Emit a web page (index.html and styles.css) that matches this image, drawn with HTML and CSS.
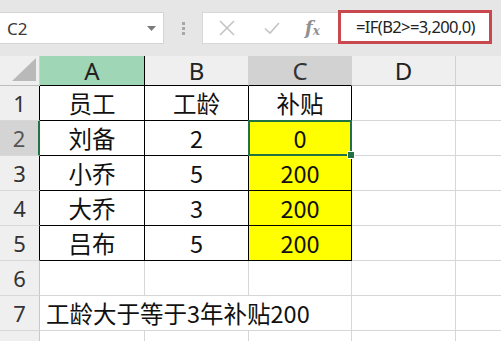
FILE: index.html
```html
<!DOCTYPE html>
<html lang="zh">
<head>
<meta charset="utf-8">
<link rel="stylesheet" href="styles.css">
</head>
<body>
<div class="app">
  <div class="toolbar">
    <div class="namebox">
      <span class="ref">C2</span>
      <svg class="caret" width="9" height="6" viewBox="0 0 9 6"><path d="M0 0h9L4.5 5z" fill="#7a7a7a"/></svg>
    </div>
    <div class="dots"><i></i><i></i><i></i></div>
    <div class="btns">
      <svg class="ico" width="18" height="18" viewBox="0 0 18 18"><path d="M2 2L16 16M16 2L2 16" stroke="#c4c4c4" stroke-width="1.6"/></svg>
      <svg class="ico chk" width="18" height="18" viewBox="0 0 18 18"><path d="M2 9.5L7 14L16 4" stroke="#c4c4c4" stroke-width="1.6" fill="none"/></svg>
      <span class="fx">f<sub>x</sub></span>
    </div>
    <div class="formula">=IF(B2&gt;=3,200,0)</div>
  </div>
  <div class="sheet">
    <div class="corner"><svg width="24" height="23" viewBox="0 0 24 23"><path d="M24 0V23H0z" fill="#b9b9b9"/></svg></div>
    <div class="ch chA">A</div>
    <div class="ch tb">B</div>
    <div class="ch tb chC">C</div>
    <div class="ch">D</div>
    <div class="ch last"></div>

    <div class="rh tbl">1</div>
    <div class="c t">员工</div>
    <div class="c t">工龄</div>
    <div class="c t">补贴</div>
    <div class="c"></div>
    <div class="c last"></div>

    <div class="rh tbl sel">2</div>
    <div class="c t">刘备</div>
    <div class="c t">2</div>
    <div class="c t y active">0</div>
    <div class="c"></div>
    <div class="c last"></div>

    <div class="rh tbl">3</div>
    <div class="c t">小乔</div>
    <div class="c t">5</div>
    <div class="c t y">200</div>
    <div class="c"></div>
    <div class="c last"></div>

    <div class="rh tbl">4</div>
    <div class="c t">大乔</div>
    <div class="c t">3</div>
    <div class="c t y">200</div>
    <div class="c"></div>
    <div class="c last"></div>

    <div class="rh tbl">5</div>
    <div class="c t">吕布</div>
    <div class="c t">5</div>
    <div class="c t y">200</div>
    <div class="c"></div>
    <div class="c last"></div>

    <div class="rh">6</div>
    <div class="c"></div>
    <div class="c"></div>
    <div class="c"></div>
    <div class="c"></div>
    <div class="c last"></div>

    <div class="rh">7</div>
    <div class="c note">工龄大于等于3年补贴200</div>
    <div class="c"></div>
    <div class="c last"></div>

    <div class="rh"></div>
    <div class="c"></div>
    <div class="c"></div>
    <div class="c"></div>
    <div class="c"></div>
    <div class="c last"></div>
  </div>
</div>
</body>
</html>
```
FILE: styles.css
```css
* { box-sizing: border-box; }
html, body { margin: 0; padding: 0; }
body {
  width: 501px;
  height: 341px;
  overflow: hidden;
  background: #ffffff;
  font-family: "Noto Sans CJK SC", "Noto Sans", sans-serif;
}
.app { width: 501px; height: 341px; overflow: hidden; }

.toolbar {
  height: 56px;
  background: #e6e6e6;
  display: flex;
  align-items: flex-start;
  padding-top: 12px;
}
.namebox {
  width: 164px;
  height: 32px;
  background: #fff;
  border: 1px solid #d4d4d4;
  border-left: none;
  display: flex;
  align-items: center;
  justify-content: space-between;
  padding: 0 7px 0 7px;
}
.ref {
  font-family: "Noto Sans", "Liberation Sans", sans-serif;
  font-size: 17px;
  color: #3a3a3a;
}
.caret { margin-top: 2px; }
.dots {
  width: 38px;
  height: 32px;
  display: flex;
  flex-direction: column;
  align-items: center;
  justify-content: center;
  gap: 2px;
}
.dots i {
  display: block;
  width: 3px;
  height: 3px;
  background: #a8a8a8;
}
.btns {
  width: 136px;
  height: 32px;
  background: #fff;
  border: 1px solid #d8d8d8;
  border-right: none;
  display: flex;
  align-items: center;
  padding-left: 15px;
}
.chk { margin-left: 27px; }
.fx {
  margin-left: 24px;
  font-family: "DejaVu Serif", "Liberation Serif", serif;
  font-style: italic;
  font-weight: bold;
  font-size: 18px;
  color: #909090;
  line-height: 1;
}
.fx sub { font-size: 12px; vertical-align: -1px; }
.formula {
  margin-top: -2px;
  width: 154px;
  height: 34px;
  background: #fff;
  border: 3px solid #c9484e;
  font-family: "Noto Sans", "Liberation Sans", sans-serif;
  font-size: 16.5px;
  letter-spacing: -0.6px;
  color: #222;
  padding-left: 15px;
  line-height: 27px;
  white-space: nowrap;
  overflow: hidden;
}

.sheet {
  display: grid;
  grid-template-columns: 40px 105px 104px 103px 104px 45px;
  grid-template-rows: 30px repeat(8, 35px);
}
.corner {
  background: #efefef;
  border-right: 1px solid #cfcfcf;
  border-bottom: 1px solid #bdbdbd;
  display: flex;
  align-items: flex-end;
  justify-content: flex-end;
  padding: 0 3px 4px 0;
}
.ch {
  background: #efefef;
  border-right: 1px solid #d2d2d2;
  border-bottom: 1px solid #bdbdbd;
  font-family: "Noto Sans", "Liberation Sans", sans-serif;
  font-size: 24px;
  color: #222;
  text-align: center;
  line-height: 30px;
}
.ch.tb, .chA { border-bottom-color: #000; }
.chA { background: #9fd6b5; border-right-color: #000; }
.chC { background: #d2d2d2; color: #333; }
.ch.last { border-right: none; }
.rh {
  background: #efefef;
  border-right: 1px solid #c8c8c8;
  border-bottom: 1px solid #d8d8d8;
  font-family: "Noto Sans", "Liberation Sans", sans-serif;
  font-size: 22px;
  color: #333;
  text-align: center;
  line-height: 34px;
}
.rh.tbl { border-right-color: #000; }
.rh.sel { background: #d4d4d4; color: #555; border-right: 2px solid #217346; }
.c {
  border-right: 1px solid #d6d6d6;
  border-bottom: 1px solid #d6d6d6;
  font-size: 23.5px;
  color: #111;
  text-align: center;
  line-height: 34px;
}
.c.last { border-right: none; }
.c.t { border-right-color: #000; border-bottom-color: #000; }
.c.y { background: #ffff00; }
.active { position: relative; }
.active::before {
  content: "";
  position: absolute;
  left: -1px;
  top: -1px;
  right: -1px;
  bottom: -1px;
  border: 2px solid #217346;
}
.active::after {
  content: "";
  position: absolute;
  right: -4px;
  bottom: -4px;
  width: 6px;
  height: 6px;
  background: #217346;
  border: 1px solid #fff;
  box-sizing: content-box;
}
.note {
  grid-column: span 3;
  text-align: left;
  padding-left: 6px;
  white-space: nowrap;
}
```
